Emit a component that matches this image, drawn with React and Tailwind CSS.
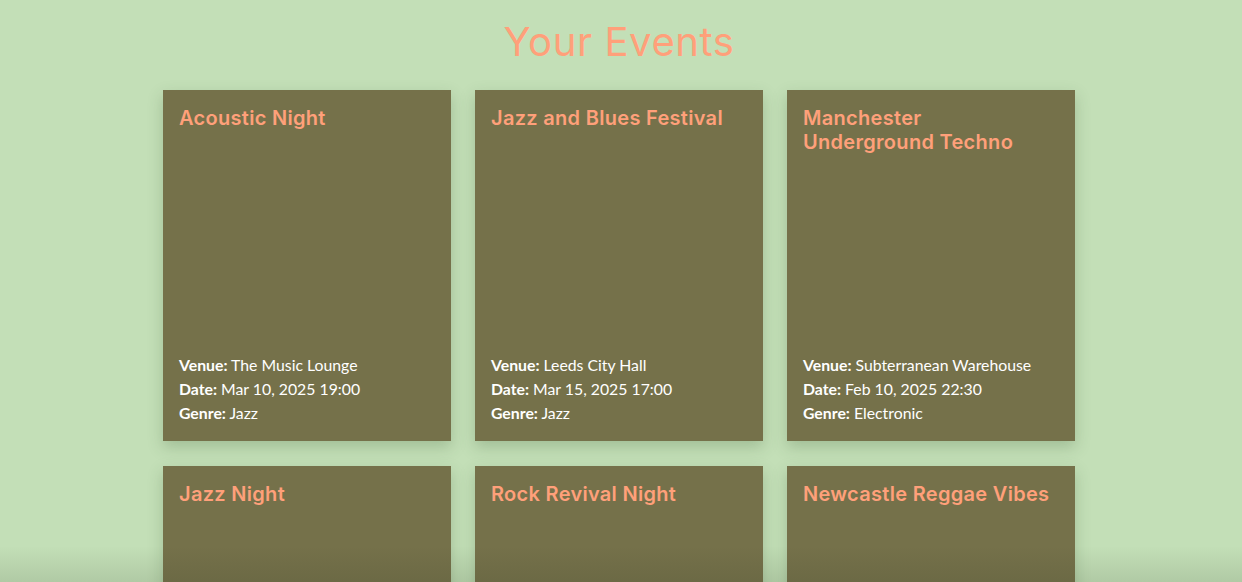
import React from "react";

const events = [
  { title: "Acoustic Night", venue: "The Music Lounge", date: "Mar 10, 2025 19:00", genre: "Jazz" },
  { title: "Jazz and Blues Festival", venue: "Leeds City Hall", date: "Mar 15, 2025 17:00", genre: "Jazz" },
  { title: "Manchester Underground Techno", venue: "Subterranean Warehouse", date: "Feb 10, 2025 22:30", genre: "Electronic" },
  { title: "Jazz Night", venue: "Blue Note Club", date: "Apr 02, 2025 20:00", genre: "Jazz" },
  { title: "Rock Revival Night", venue: "The Rock Bar", date: "Apr 12, 2025 21:00", genre: "Rock" },
  { title: "Newcastle Reggae Vibes", venue: "Quayside Arena", date: "May 05, 2025 19:30", genre: "Reggae" },
];

const heading = { fontFamily: "Inter, 'Open Sans', sans-serif" };
const body = { fontFamily: "Lato, 'Open Sans', sans-serif" };

function Card({ e }) {
  return (
    <div className="flex h-[351px] flex-col justify-between bg-[#75714a] p-4 shadow-[0_6px_14px_rgba(60,90,50,0.25)]">
      <h2 style={heading} className="pr-[6px] text-[20px] font-semibold leading-[24px] tracking-[0.3px] text-[#ffa07a]">
        {e.title}
      </h2>
      <div style={body} className="text-[15.8px] leading-[24px] text-white">
        <p><span className="font-bold">Venue:</span> {e.venue}</p>
        <p><span className="font-bold">Date:</span> {e.date}</p>
        <p><span className="font-bold">Genre:</span> {e.genre}</p>
      </div>
    </div>
  );
}

export default function App() {
  return (
    <div className="relative h-[582px] overflow-hidden bg-[#c3dfb7] pr-[4px]">
      <h1 style={heading} className="pt-[12px] text-center text-[40px] font-normal leading-[60px] tracking-[0.6px] text-[#ffa07a]">
        Your Events
      </h1>
      <div className="mx-auto mt-[18px] grid w-[912px] grid-cols-3 gap-x-6 gap-y-[25px]">
        {events.map((e) => (
          <Card key={e.title} e={e} />
        ))}
      </div>
      <div className="pointer-events-none absolute inset-x-0 bottom-0 h-[36px] bg-gradient-to-b from-transparent to-[rgba(40,50,30,0.12)]" />
    </div>
  );
}
